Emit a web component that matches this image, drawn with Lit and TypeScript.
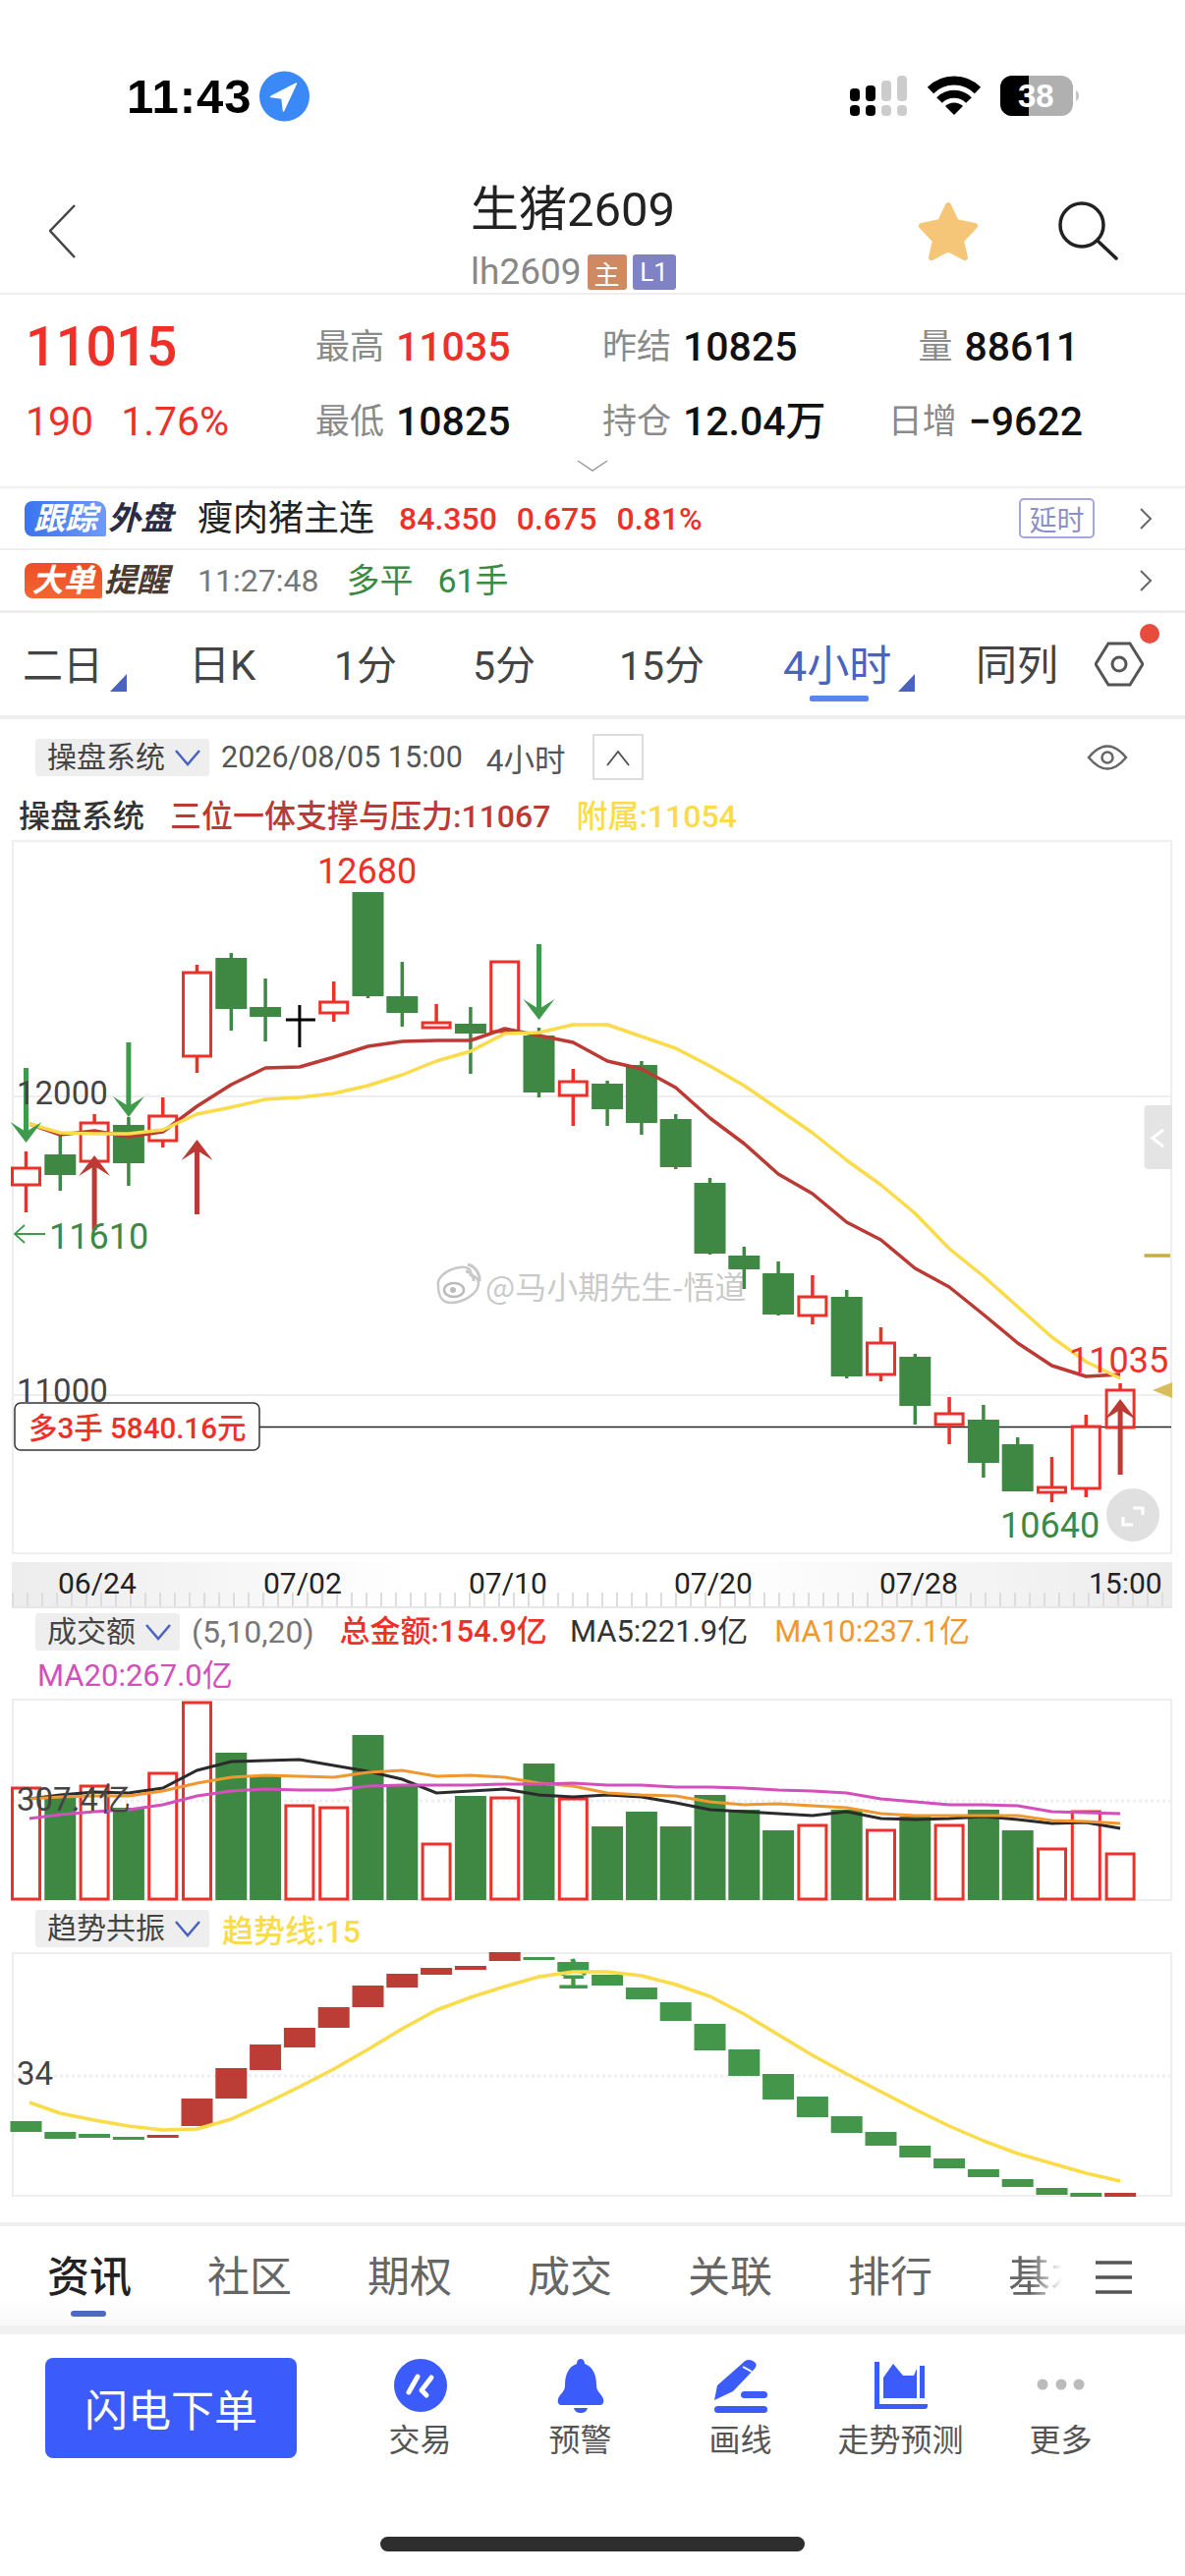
import { LitElement, html, svg, css } from "lit";
import { customElement } from "lit/decorators.js";

const X = (i: number) => 26.5 + 34.8 * i;
const GREEN = "#3f8843";
const RED = "#ee3028";
const LINE_RED = "#bb3a34";
const YELLOW = "#fadb4a";
const ARROW_GREEN = "#3f9a4c";

type C = [string, number, number, number, number];
const candles: C[] = [
  ["r", 1189, 1208, 1173, 1235], ["g", 1176, 1197, 1156, 1213], ["r", 1143, 1184, 1135, 1200], ["g", 1146, 1185, 1138, 1208],
  ["r", 1136, 1163, 1118, 1169], ["r", 990, 1077, 983, 1093], ["g", 976, 1028, 971, 1050], ["g", 1026, 1036, 997, 1061],
  ["k", 1039, 1039, 1024, 1067], ["r", 1020, 1033, 1000, 1041], ["g", 909, 1015, 909, 1017], ["g", 1015, 1032, 980, 1046],
  ["r", 1041, 1048, 1023, 1048], ["g", 1043, 1053, 1026, 1094], ["r", 979, 1052, 979, 1052], ["g", 1055, 1113, 1047, 1118],
  ["r", 1101, 1117, 1089, 1147], ["g", 1104, 1130, 1101, 1147], ["g", 1085, 1144, 1081, 1156], ["g", 1140, 1189, 1135, 1191],
  ["g", 1205, 1277, 1200, 1278], ["g", 1279, 1293, 1270, 1313], ["g", 1297, 1339, 1285, 1340], ["r", 1320, 1341, 1299, 1349],
  ["g", 1321, 1402, 1314, 1404], ["r", 1367, 1401, 1352, 1407], ["g", 1382, 1432, 1379, 1451], ["r", 1439, 1452, 1423, 1471],
  ["g", 1446, 1490, 1431, 1505], ["g", 1471, 1519, 1464, 1519], ["r", 1514, 1521, 1484, 1530], ["r", 1452, 1517, 1441, 1525],
  ["r", 1415, 1455, 1409, 1458],
];
const maRed = [1145, 1156, 1152, 1158, 1153, 1127, 1105, 1088, 1087, 1077, 1066, 1061, 1060, 1060, 1048, 1055, 1062, 1081, 1089, 1108, 1139, 1165, 1196, 1216, 1245, 1263, 1292, 1311, 1339, 1368, 1391, 1402, 1400];
const maYellow = [1145, 1154, 1155, 1155, 1151, 1135, 1128, 1120, 1118, 1114, 1106, 1095, 1081, 1071, 1053, 1052, 1044, 1044, 1056, 1068, 1086, 1106, 1130, 1154, 1182, 1207, 1236, 1272, 1300, 1331, 1362, 1387, 1404];

const volTops = [1819, 1830, 1817, 1840, 1804, 1732, 1784, 1808, 1837, 1839, 1766, 1817, 1876, 1828, 1829, 1795, 1830, 1859, 1844, 1859, 1827, 1842, 1863, 1857, 1842, 1862, 1849, 1857, 1842, 1863, 1881, 1843, 1886];
const volBlack = [1831, 1827, 1824, 1825, 1820, 1802, 1793, 1792, 1791, 1797, 1803, 1811, 1825, 1823, 1821, 1827, 1829, 1827, 1829, 1835, 1842, 1844, 1846, 1848, 1844, 1851, 1852, 1851, 1849, 1852, 1856, 1855, 1861];
const volOrange = [1831, 1829, 1828, 1828, 1823, 1815, 1809, 1807, 1808, 1809, 1804, 1802, 1808, 1807, 1809, 1815, 1818, 1825, 1827, 1828, 1834, 1837, 1836, 1838, 1840, 1846, 1848, 1848, 1848, 1848, 1853, 1854, 1856];
const volPink = [1851, 1847, 1844, 1842, 1837, 1828, 1823, 1821, 1822, 1822, 1818, 1817, 1817, 1817, 1816, 1816, 1815, 1817, 1817, 1819, 1819, 1820, 1822, 1823, 1825, 1831, 1834, 1837, 1837, 1838, 1844, 1845, 1846];

const blocks: [string, number, number][] = [
  ["g", 2160, 2171], ["g", 2171, 2178], ["g", 2173, 2177], ["g", 2176, 2179], ["r", 2174, 2177], ["r", 2137, 2165], ["r", 2106, 2137], ["r", 2082, 2108],
  ["r", 2065, 2085], ["r", 2044, 2065], ["r", 2022, 2044], ["r", 2010, 2024], ["r", 2004, 2011], ["r", 2002, 2006], ["r", 1988, 1997], ["g", 1993, 1996],
  ["g", 1998, 2008], ["g", 2011, 2022], ["g", 2024, 2036], ["g", 2039, 2058], ["g", 2061, 2088], ["g", 2087, 2114], ["g", 2112, 2138], ["g", 2135, 2156],
  ["g", 2155, 2172], ["g", 2171, 2185], ["g", 2185, 2197], ["g", 2198, 2208], ["g", 2209, 2217], ["g", 2219, 2227], ["g", 2228, 2235], ["g", 2233, 2237], ["r", 2233, 2237],
];
const trendLine = [2141, 2152, 2159, 2165, 2169, 2168, 2158, 2142, 2125, 2107, 2087, 2066, 2047, 2034, 2023, 2013, 2008, 2008, 2012, 2021, 2033, 2051, 2072, 2093, 2112, 2130, 2148, 2165, 2180, 2193, 2203, 2213, 2221];

const pts = (ys: number[]) => ys.map((y, i) => `${i === 0 ? 30 : X(i)},${y}`).join(" ");

const candle = (c: C, i: number) => {
  const [t, top, bot, hi, lo] = c;
  const x = X(i);
  if (t === "k") {
    return svg`<path d="M${x - 14} ${top}H${x + 16}M${x} ${hi}V${lo}" stroke="#000" stroke-width="3" fill="none"/>`;
  }
  if (t === "g") {
    return svg`<path d="M${x} ${hi}V${lo}" stroke=${GREEN} stroke-width="3.5"/><rect x=${x - 16} y=${top} width="32" height=${bot - top} fill=${GREEN}/>`;
  }
  return svg`<path d="M${x} ${hi}V${top}M${x} ${bot}V${lo}" stroke=${RED} stroke-width="3.5"/><rect x=${x - 14} y=${top + 1} width="28" height=${Math.max(bot - top - 2, 2)} fill="none" stroke=${RED} stroke-width="3"/>`;
};

const arrowDown = (i: number, top: number, tip: number) => {
  const x = X(i);
  return svg`<path d="M${x} ${top}V${tip - 8}" stroke=${ARROW_GREEN} stroke-width="5"/><path d="M${x} ${tip}L${x - 16} ${tip - 21}L${x} ${tip - 11}L${x + 16} ${tip - 21}Z" fill=${ARROW_GREEN}/>`;
};
const arrowUp = (i: number, bottom: number, tip: number) => {
  const x = X(i);
  return svg`<path d="M${x} ${bottom}V${tip + 8}" stroke=${LINE_RED} stroke-width="5"/><path d="M${x} ${tip}L${x - 16} ${tip + 21}L${x} ${tip + 11}L${x + 16} ${tip + 21}Z" fill=${LINE_RED}/>`;
};

@customElement("app-root")
export class AppRoot extends LitElement {
  static styles = css`
    :host {
      display: block;
      width: 1206px;
      height: 2622px;
      overflow: hidden;
      background: #fff;
      font-family: Roboto, "Noto Sans CJK SC", sans-serif;
      color: #222;
    }
    svg { display: block; }
    .status { height: 180px; padding: 72px 0 0 129px; box-sizing: border-box; display: flex; align-items: flex-start; }
    .time { font: 700 49px/52px "Liberation Sans", sans-serif; color: #000; letter-spacing: 1px; margin-right: 7px; }
    .status-right { margin-left: auto; margin-right: 101px; }

    .nav { height: 120px; border-bottom: 2px solid #eee; box-sizing: border-box; display: flex; align-items: flex-start; }
    .back { margin: 28px 0 0 50px; }
    .title-wrap { margin-left: 402px; width: 240px; padding-top: 9px; }
    .title { font-size: 49px; line-height: 50px; color: #222; }
    .sub { display: flex; align-items: center; height: 36px; margin-top: 20px; gap: 6px; }
    .sub-code { font-size: 37px; line-height: 36px; color: #888; }
    .b { height: 36px; display: flex; align-items: center; justify-content: center; color: #fff; font-size: 26px; border-radius: 3px; }
    .b-main { width: 40px; background: #cf8a62; }
    .b-l1 { width: 44px; background: #8082c6; }
    .star { margin: 24px 0 0 215px; }
    .search { margin: 24px 0 0 80px; }

    .quote { height: 197px; border-bottom: 2px solid #eee; box-sizing: border-box; padding-top: 15px; display: flex; flex-direction: column; }
    .q-grid { display: grid; grid-template-columns: 295px 292px 293px 196px; grid-auto-rows: 76px; padding-left: 26px; align-items: center; }
    .cell { display: flex; align-items: center; gap: 12px; line-height: 1; white-space: nowrap; }
    .cell.end { justify-content: flex-end; }
    .cell.nudge { padding-right: 4px; }
    .lbl { font-size: 35px; color: #8a8a8a; flex: none; }
    .val { font-size: 41px; font-weight: 500; color: #111; }
    .val.red { color: ${css([RED] as any)}; }
    .last { font-size: 55px; font-weight: 500; letter-spacing: -0.5px; color: ${css([RED] as any)}; }
    .chg { display: flex; gap: 28px; font-size: 41px; color: ${css([RED] as any)}; }
    .more { align-self: center; margin-top: 1px; }

    .info { height: 63px; border-bottom: 2px solid #eee; box-sizing: border-box; display: flex; align-items: center; padding: 0 33px 0 25px; }
    .info.last-row { height: 64px; border-bottom: 3px solid #eee; }
    .tag { height: 36px; font-size: 32px; font-weight: 700; font-style: italic; color: #fff; border-radius: 8px 10px 2px 8px; display: flex; align-items: center; justify-content: center; line-height: 1; }
    .tag-blue { width: 83px; background: linear-gradient(90deg, #3a74ee, #6f9afa); }
    .tag-orange { width: 79px; background: linear-gradient(180deg, #ee4d25, #f26633); }
    .tag-text { font-size: 33px; font-weight: 700; font-style: italic; line-height: 1; margin-left: 2px; }
    .dk { color: #2b2b44; }
    .bn { color: #4a3a30; }
    .name { font-size: 36px; color: #222; margin-left: 25px; line-height: 1; }
    .nums { display: flex; gap: 20px; margin-left: 25px; font-size: 32px; font-weight: 500; color: ${css([RED] as any)}; }
    .delay { margin-left: auto; width: 77px; height: 41px; box-sizing: border-box; border: 2px solid #a3a7dc; border-radius: 5px; color: #8a8fcc; font-size: 28px; display: flex; align-items: center; justify-content: center; }
    .chev { margin-left: 45px; }
    .chev.auto { margin-left: auto; }
    .clock { font-size: 32px; color: #777; margin-left: 29px; }
    .deal { font-size: 34px; color: #3a8a42; margin-left: 28px; line-height: 1; }
    .deal + .deal { margin-left: 25px; }

    .periods { height: 108px; box-sizing: border-box; border-bottom: 4px solid #eee; padding: 30px 0 0 23px; display: grid; grid-template-columns: 169px 148px 141px 149px 167px 196px 121px 60px; align-items: start; }
    .p { font-size: 41px; line-height: 48px; color: #444; position: relative; width: max-content; }
    .p.k { font-size: 42px; }
    .p.on { color: #4a62c0; font-size: 43px; }
    .p.tri::after { content: ""; position: absolute; right: -24px; bottom: -2px; border-style: solid; border-width: 0 0 18px 17px; border-color: transparent transparent #4a62c0 transparent; }
    .p.on::before { content: ""; position: absolute; left: 27px; bottom: -12px; width: 60px; height: 6px; border-radius: 2px; background: #5b85ee; }
    .gear { position: relative; width: 50px; margin-top: -1px; }
    .dot { position: absolute; left: 46px; top: -18px; width: 20px; height: 20px; border-radius: 50%; background: #e84c3d; }

    .ind { display: flex; align-items: center; padding: 15px 58px 0 36px; height: 47px; }
    .chip { height: 38px; box-sizing: border-box; background: #eee; border-radius: 3px; display: flex; align-items: center; padding: 0 9px 0 12px; gap: 10px; font-size: 30px; color: #444; line-height: 1; }
    .date { font-size: 30.5px; color: #555; margin-left: 12px; }
    .hour { font-size: 31.5px; color: #555; margin-left: 24px; }
    .up { width: 52px; height: 47px; box-sizing: border-box; border: 2px solid #ddd; display: flex; align-items: center; justify-content: center; margin-left: 27px; }
    .eye { margin-left: auto; }

    .legend { display: flex; align-items: center; height: 36px; margin-top: 19px; padding-left: 19px; gap: 26px; font-size: 32px; margin-bottom: 6px; line-height: 1; font-weight: 500; }
    .legend .h { color: #333; }
    .legend .m { color: ${css([LINE_RED] as any)}; }
    .legend .y { color: ${css([YELLOW] as any)}; }

    .axis { margin: 8px 13px 0 12px; width: 1181px; height: 47px; background: linear-gradient(90deg, #ececec, #fff 35%, #fff 60%, #ececec); }

    .vol-row { display: flex; align-items: center; height: 39px; padding: 4px 0 0 36px; font-size: 32px; line-height: 1; white-space: nowrap; }
    .vol-params { color: #777; margin-left: 12px; }
    .vol-total { color: ${css([RED] as any)}; font-size: 31px; font-weight: 500; margin-left: 26px; }
    .vol-ma5 { color: #333; margin-left: 23px; font-size: 31px; }
    .vol-ma10 { color: #f0982e; margin-left: 27px; font-size: 31px; }
    .vol-ma20 { color: #d24fbc; font-size: 31px; line-height: 36px; margin: 8px 0 5px 38px; }
    .tr-row { display: flex; align-items: center; height: 38px; margin: 9px 0 5px 36px; }
    .tr-val { color: ${css([YELLOW] as any)}; font-size: 32px; font-weight: 500; margin-left: 13px; }

    .tabs { margin-top: 25px; border-top: 4px solid #eee; height: 114px; box-sizing: border-box; background: linear-gradient(#fff 72px, #f8f8f8); border-bottom: 9px solid #f0f0f0; display: flex; padding: 27px 54px 0 48px; gap: 77px; align-items: flex-start; }
    .t { font-size: 43px; line-height: 50px; color: #666; position: relative; flex: none; }
    .t.on { color: #222; font-weight: 500; }
    .t.on::after { content: ""; position: absolute; left: 24px; top: 59px; width: 36px; height: 6px; border-radius: 3px; background: #4c68c0; }
    .t.fade { white-space: nowrap; -webkit-mask-image: linear-gradient(90deg, #000 26%, transparent 64%); mask-image: linear-gradient(90deg, #000 26%, transparent 64%); margin-right: -86px; }
    .menu { margin-left: auto; margin-top: 8px; flex: none; }

    .bar { display: flex; align-items: flex-start; padding: 24px 0 0 46px; height: 126px; box-sizing: border-box; }
    .trade { width: 256px; height: 102px; border-radius: 8px; background: #3b5bfb; color: #fff; font-size: 44px; display: flex; align-items: center; justify-content: center; }
    .acts { display: flex; margin-left: 44px; }
    .act { width: 163px; display: flex; flex-direction: column; align-items: center; font-size: 32px; line-height: 36px; color: #555; }
    .act span { margin-top: 9px; }
    .home { width: 432px; height: 15px; border-radius: 8px; background: #2e2e2e; margin: 80px auto 0; }

    .ax { font-size: 33px; fill: #444; }
    .lab { font-size: 36px; }
    .tm { font-size: 30px; fill: #222; }
    .tagtxt { font-size: 29.5px; font-weight: 500; fill: #ee3028; }
    .wm { font-size: 32px; fill: rgba(165, 165, 165, 0.6); stroke: #fff; stroke-width: 2px; paint-order: stroke; font-family: "Noto Sans CJK SC", sans-serif; }
    .bat { font: 700 33px "Liberation Sans", sans-serif; fill: #fff; }
    .empty { font-size: 33px; fill: #3f9a4c; font-weight: 700; }
  `;

  private chip(text: string) {
    return html`<div class="chip">${text}
      <svg width="26" height="20" viewBox="0 0 26 20"><path d="M1 3L13 17L25 3" fill="none" stroke="#4a62c0" stroke-width="2.5"/></svg>
    </div>`;
  }

  private status() {
    return html`<div class="status">
      <span class="time">11:43</span>
      <svg width="51" height="52" viewBox="264 72 51 52">
        <circle cx="289.5" cy="98" r="25.5" fill="#3b89f7"/>
        <path d="M301.5 85L275.5 98.5L287 100L288.5 113Z" fill="#fff" stroke="#fff" stroke-width="1.5" stroke-linejoin="round"/>
      </svg>
      <svg class="status-right" width="240" height="52" viewBox="865 72 240 52">
        <g fill="#000">
          <rect x="865" y="90" width="10" height="13" rx="4"/><rect x="881" y="87" width="10" height="16" rx="4"/>
          <rect x="865" y="107" width="10" height="11" rx="4"/><rect x="881" y="107" width="10" height="11" rx="4"/>
        </g>
        <g fill="#ccc">
          <rect x="897" y="82" width="10" height="21" rx="4"/><rect x="913" y="77" width="10" height="26" rx="4"/>
          <rect x="897" y="107" width="10" height="11" rx="4"/><rect x="913" y="107" width="10" height="11" rx="4"/>
        </g>
        <path d="M947 92A34 34 0 0 1 995 92" fill="none" stroke="#000" stroke-width="9"/>
        <path d="M956 102A21 21 0 0 1 986 102" fill="none" stroke="#000" stroke-width="8"/>
        <path d="M971 117L962 108A13 13 0 0 1 980 108Z" fill="#000"/>
        <rect x="1018" y="77" width="74" height="41" rx="12" fill="#b0b0b0"/>
        <path d="M1030 77H1047V118H1030A12 12 0 0 1 1018 106V89A12 12 0 0 1 1030 77Z" fill="#000"/>
        <path d="M1095 92C1099 94 1099 101 1095 103Z" fill="#c4c4c4"/>
        <text class="bat" x="1036" y="109">38</text>
      </svg>
    </div>`;
  }

  private nav() {
    return html`<div class="nav">
      <svg class="back" width="27" height="56" viewBox="50 208 27 56"><path d="M76 209L51 235L76 262" fill="none" stroke="#444" stroke-width="2.5"/></svg>
      <div class="title-wrap">
        <div class="title">生猪2609</div>
        <div class="sub"><span class="sub-code">lh2609</span><span class="b b-main">主</span><span class="b b-l1">L1</span></div>
      </div>
      <svg class="star" width="62" height="62" viewBox="933 204 62 62">
        <path d="M964 209L972 226L991 230L977 245L981 262L964 253L947 262L951 245L937 230L956 226Z" fill="#f5c678" stroke="#f5c678" stroke-width="6" stroke-linejoin="round"/>
      </svg>
      <svg class="search" width="62" height="62" viewBox="1076 204 62 62">
        <circle cx="1101" cy="229" r="22" fill="none" stroke="#222" stroke-width="3.5"/>
        <path d="M1117 245L1136 263" stroke="#222" stroke-width="3.5" stroke-linecap="round"/>
      </svg>
    </div>`;
  }

  private quote() {
    return html`<div class="quote">
      <div class="q-grid">
        <div class="last">11015</div>
        <div class="cell"><span class="lbl">最高</span><span class="val red">11035</span></div>
        <div class="cell"><span class="lbl">昨结</span><span class="val">10825</span></div>
        <div class="cell end nudge"><span class="lbl">量</span><span class="val">88611</span></div>
        <div class="chg"><span>190</span><span>1.76%</span></div>
        <div class="cell"><span class="lbl">最低</span><span class="val">10825</span></div>
        <div class="cell"><span class="lbl">持仓</span><span class="val">12.04万</span></div>
        <div class="cell end"><span class="lbl">日增</span><span class="val">−9622</span></div>
      </div>
      <svg class="more" width="32" height="12" viewBox="0 0 32 12"><path d="M1 1L16 11L31 1" fill="none" stroke="#999" stroke-width="1.5"/></svg>
    </div>`;
  }

  private chevron(cls: string) {
    return html`<svg class=${cls} width="14" height="22" viewBox="0 0 14 22"><path d="M2 1L12 11L2 21" fill="none" stroke="#666" stroke-width="2"/></svg>`;
  }

  private info() {
    return html`<div class="info">
        <span class="tag tag-blue">跟踪</span><span class="tag-text dk">外盘</span>
        <span class="name">瘦肉猪主连</span>
        <span class="nums"><span>84.350</span><span>0.675</span><span>0.81%</span></span>
        <span class="delay">延时</span>
        ${this.chevron("chev")}
      </div>
      <div class="info last-row">
        <span class="tag tag-orange">大单</span><span class="tag-text bn">提醒</span>
        <span class="clock">11:27:48</span>
        <span class="deal">多平</span><span class="deal">61手</span>
        ${this.chevron("chev auto")}
      </div>`;
  }

  private periods() {
    return html`<div class="periods">
      <div class="p tri">二日</div><div class="p k">日K</div><div class="p">1分</div><div class="p">5分</div><div class="p">15分</div>
      <div class="p on tri">4小时</div><div class="p k">同列</div>
      <div class="gear">
        <svg width="50" height="46" viewBox="1115 653 50 46">
          <path d="M1116 676L1129 655H1151L1164 676L1151 697H1129Z" fill="none" stroke="#555" stroke-width="3"/>
          <circle cx="1140" cy="676" r="7" fill="none" stroke="#555" stroke-width="3"/>
        </svg>
        <div class="dot"></div>
      </div>
    </div>`;
  }

  private indicator() {
    return html`<div class="ind">
        ${this.chip("操盘系统")}
        <span class="date">2026/08/05 15:00</span><span class="hour">4小时</span>
        <div class="up"><svg width="26" height="18" viewBox="0 0 26 18"><path d="M2 17L13 3L24 17" fill="none" stroke="#555" stroke-width="2"/></svg></div>
        <svg class="eye" width="42" height="30" viewBox="1108 756 42 30">
          <path d="M1110 771Q1129 748 1148 771Q1129 794 1110 771Z" fill="none" stroke="#666" stroke-width="2.5"/>
          <circle cx="1129" cy="771" r="5.5" fill="none" stroke="#666" stroke-width="2.5"/>
        </svg>
      </div>
      <div class="legend"><span class="h">操盘系统</span><span class="m">三位一体支撑与压力:11067</span><span class="y">附属:11054</span></div>`;
  }

  private mainChart() {
    return html`<svg width="1206" height="727" viewBox="0 856 1206 727">
      <rect x="13" y="857" width="1179" height="725" fill="none" stroke="#eee" stroke-width="2"/>
      <path d="M13 1117H1192M13 1421H1192" stroke="#eee" stroke-width="2"/>
      <path d="M264 1453.5H1192" stroke="#222" stroke-width="1.5"/>
      <g>
        <path d="M444 1310c-2-8 8-17 22-19 8-1 12 2 11 8 5 1 8 4 8 8 0 11-16 20-28 20-8 0-13-6-13-17z" transform="translate(2 0)" fill="rgba(255,255,255,.8)" stroke="#c8c8c8" stroke-width="2.5"/>
        <ellipse cx="462" cy="1314" rx="10" ry="7" fill="none" stroke="#bbb" stroke-width="2.5"/>
        <circle cx="461" cy="1314" r="3" fill="#bbb"/>
        <path d="M474 1295a9 9 0 0 1 8 10M476 1288a16 16 0 0 1 12 17" fill="none" stroke="#c8c8c8" stroke-width="3"/>
        <text class="wm" x="494" y="1323">@马小期先生-悟道</text>
      </g>
      ${candles.map(candle)}
      <polyline points=${pts(maRed)} fill="none" stroke=${LINE_RED} stroke-width="3.5" stroke-linejoin="round"/>
      <polyline points=${pts(maYellow)} fill="none" stroke=${YELLOW} stroke-width="3.5" stroke-linejoin="round"/>
      ${arrowDown(0, 1088, 1164)}${arrowDown(3, 1062, 1138)}${arrowDown(15, 962, 1039)}
      ${arrowUp(2, 1253, 1177)}${arrowUp(5, 1237, 1161)}${arrowUp(32, 1502, 1425)}
      <text class="ax" x="17" y="1125">12000</text>
      <text class="ax" x="17" y="1428">11000</text>
      <text class="lab" x="323" y="900" fill=${RED}>12680</text>
      <path d="M46 1257H15M25 1248L15 1257L25 1266" fill="none" stroke=${ARROW_GREEN} stroke-width="1.8"/>
      <text class="lab" x="50" y="1272" fill=${GREEN}>11610</text>
      <text class="lab" x="1088" y="1398" fill=${RED}>11035</text>
      <text class="lab" x="1018" y="1566" fill=${GREEN}>10640</text>
      <rect x="15" y="1429" width="249" height="48" rx="6" fill="#fff" stroke="#333" stroke-width="1.5"/>
      <text class="tagtxt" x="29" y="1465">多3手 5840.16元</text>
      <path d="M1164.5 1130a4 4 0 0 1 4-4H1193V1191H1168.5a4 4 0 0 1-4-4Z" fill="#e4e4e4"/>
      <path d="M1184 1151L1173 1159.5L1184 1168" fill="none" stroke="#fff" stroke-width="3"/>
      <path d="M1164.5 1279H1191" stroke="#c9ab47" stroke-width="3.5"/>
      <path d="M1193 1408V1424L1173 1416Z" fill="#d9bd5c"/>
      <circle cx="1153" cy="1543" r="27" fill="#e0e0e0"/>
      <path d="M1153 1536H1163V1543M1143 1545V1553H1153" fill="none" stroke="#fff" stroke-width="3"/>
    </svg>`;
  }

  private timeAxis() {
    const ticks = Array.from({ length: 79 }, (_, i) => 12 + i * 15);
    const labels: [number, string][] = [[59, "06/24"], [268, "07/02"], [477, "07/10"], [686, "07/20"], [895, "07/28"], [1108, "15:00"]];
    return html`<svg class="axis" viewBox="12 1591 1181 47">
      ${ticks.map((x) => svg`<path d="M${x + 1} 1622V1638" stroke="#ddd" stroke-width="2"/>`)}
      <path d="M12 1637H1193" stroke="#e6e6e6" stroke-width="2"/>
      ${labels.map(([x, t]) => svg`<text class="tm" x=${x} y="1623">${t}</text>`)}
    </svg>`;
  }

  private volumeChart() {
    return html`<div class="vol-row">
        ${this.chip("成交额")}
        <span class="vol-params">(5,10,20)</span>
        <span class="vol-total">总金额:154.9亿</span>
        <span class="vol-ma5">MA5:221.9亿</span>
        <span class="vol-ma10">MA10:237.1亿</span>
      </div>
      <div class="vol-ma20">MA20:267.0亿</div>
      <svg width="1206" height="206" viewBox="0 1729 1206 206">
        <rect x="13" y="1730" width="1179" height="204" fill="none" stroke="#eee" stroke-width="2"/>
        <path d="M13 1833H1192" stroke="#eee" stroke-width="3" stroke-dasharray="3 3"/>
        ${volTops.map((top, i) => {
          const x = X(i);
          return candles[i][0] === "g"
            ? svg`<rect x=${x - 16} y=${top} width="32" height=${1934 - top} fill=${GREEN}/>`
            : svg`<rect x=${x - 14} y=${top + 1} width="28" height=${1932 - top} fill="none" stroke=${RED} stroke-width="3"/>`;
        })}
        <polyline points=${pts(volBlack)} fill="none" stroke="#2b2b2b" stroke-width="3"/>
        <polyline points=${pts(volOrange)} fill="none" stroke="#f0982e" stroke-width="3"/>
        <polyline points=${pts(volPink)} fill="none" stroke="#d24fbc" stroke-width="3"/>
        <text class="ax" x="17" y="1843">307.4亿</text>
      </svg>`;
  }

  private trendChart() {
    return html`<div class="tr-row">${this.chip("趋势共振")}<span class="tr-val">趋势线:15</span></div>
      <svg width="1206" height="250" viewBox="0 1988 1206 250">
        <rect x="13" y="1989" width="1179" height="247" fill="none" stroke="#eee" stroke-width="2"/>
        <path d="M13 2114H1192" stroke="#eee" stroke-width="3" stroke-dasharray="3 3"/>
        ${blocks.map(([t, top, bot], i) => svg`<rect x=${X(i) - 16} y=${top} width="32" height=${bot - top} fill=${t === "g" ? "#44964a" : "#bb3d36"}/>`)}
        <text class="empty" x="567" y="2023">空</text>
        <polyline points=${pts(trendLine)} fill="none" stroke=${YELLOW} stroke-width="3.5" stroke-linejoin="round"/>
        <text class="ax" x="17" y="2123">34</text>
      </svg>`;
  }

  private tabs() {
    return html`<div class="tabs">
      <div class="t on">资讯</div><div class="t">社区</div><div class="t">期权</div><div class="t">成交</div><div class="t">关联</div><div class="t">排行</div>
      <div class="t fade">基本</div>
      <svg class="menu" width="37" height="34" viewBox="0 0 37 34"><path d="M0 2H37M0 17H37M0 32H37" stroke="#555" stroke-width="3.5"/></svg>
    </div>`;
  }

  private bar() {
    const B = "#3b5bfb";
    return html`<div class="bar">
        <div class="trade">闪电下单</div>
        <div class="acts">
          <div class="act">
            <svg width="60" height="57" viewBox="398 2400 60 57">
              <circle cx="428" cy="2428" r="27" fill=${B}/>
              <path d="M425 2419L416 2435M439 2420L429 2433L434 2438" fill="none" stroke="#fff" stroke-width="5" stroke-linecap="round" stroke-linejoin="round"/>
            </svg><span>交易</span>
          </div>
          <div class="act">
            <svg width="60" height="57" viewBox="561 2400 60 57">
              <path d="M591 2401C594 2401 595 2404 595 2406C604 2409 607 2418 607 2428C607 2435 613 2437 614 2442C615 2446 613 2448 610 2448H572C569 2448 567 2446 568 2442C569 2437 575 2435 575 2428C575 2418 578 2409 587 2406C587 2404 588 2401 591 2401Z" fill=${B}/>
              <path d="M584 2451H598C597 2455 594 2456 591 2456C588 2456 585 2455 584 2451Z" fill=${B}/>
            </svg><span>预警</span>
          </div>
          <div class="act">
            <svg width="60" height="57" viewBox="724 2400 60 57">
              <path d="M727 2443L730 2428L755 2406Q760 2400 766 2403Q772 2406 768 2411L746 2434Z" fill=${B}/>
              <path d="M756 2409L765 2414" stroke="#fff" stroke-width="2"/>
              <rect x="754" y="2434" width="27" height="7" rx="3.5" fill=${B}/>
              <rect x="727" y="2449" width="54" height="7" rx="3.5" fill=${B}/>
            </svg><span>画线</span>
          </div>
          <div class="act">
            <svg width="60" height="57" viewBox="887 2400 60 57">
              <path d="M890 2404H895V2447H944V2449Q944 2452 941 2452H890Z" fill=${B}/>
              <path d="M899 2441V2420L909 2406L919 2418H930L933 2411V2441Z" fill=${B}/>
              <rect x="936" y="2408" width="5" height="33" fill=${B}/>
            </svg><span>走势预测</span>
          </div>
          <div class="act">
            <svg width="60" height="57" viewBox="1050 2400 60 57">
              <circle cx="1061" cy="2427" r="5.5" fill="#bbb"/><circle cx="1080" cy="2427" r="5.5" fill="#bbb"/><circle cx="1098" cy="2427" r="5.5" fill="#bbb"/>
            </svg><span>更多</span>
          </div>
        </div>
      </div>
      <div class="home"></div>`;
  }

  render() {
    return html`${this.status()}${this.nav()}${this.quote()}${this.info()}${this.periods()}${this.indicator()}
      ${this.mainChart()}${this.timeAxis()}${this.volumeChart()}${this.trendChart()}${this.tabs()}${this.bar()}`;
  }
}
